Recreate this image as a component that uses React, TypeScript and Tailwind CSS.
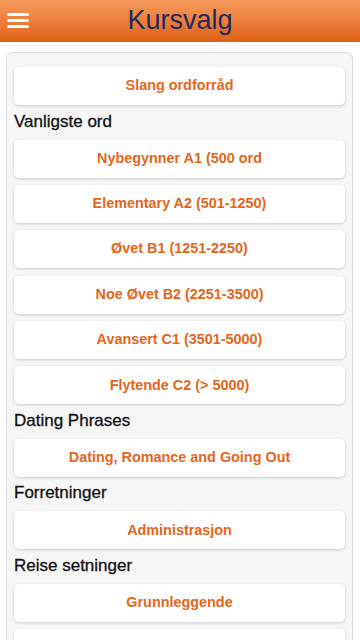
const sections: { title?: string; items: string[] }[] = [
  { items: ['Slang ordforråd'] },
  {
    title: 'Vanligste ord',
    items: [
      'Nybegynner A1 (500 ord',
      'Elementary A2 (501-1250)',
      'Øvet B1 (1251-2250)',
      'Noe Øvet B2 (2251-3500)',
      'Avansert C1 (3501-5000)',
      'Flytende C2 (> 5000)',
    ],
  },
  { title: 'Dating Phrases', items: ['Dating, Romance and Going Out'] },
  { title: 'Forretninger', items: ['Administrasjon'] },
  // the last card is only just showing at the bottom edge
  { title: 'Reise setninger', items: ['Grunnleggende', ''] },
]

export default function App () {
  return (
    <div className="h-[640px] overflow-hidden bg-white font-['Liberation_Sans','Arial',sans-serif]">
      <header className="relative h-[42px] bg-gradient-to-b from-[#f79b5c] to-[#e0600e] flex items-center justify-center">
        <button className="absolute left-[7px] top-[13px] flex flex-col gap-[3px]" aria-label="Meny">
          <span className="block w-[22px] h-[3px] rounded-full bg-white" />
          <span className="block w-[22px] h-[3px] rounded-full bg-white" />
          <span className="block w-[22px] h-[3px] rounded-full bg-white" />
        </button>
        <h1 className="text-[27px] leading-none text-[#1f2a5c] mt-[-1px]">Kursvalg</h1>
      </header>

      <main className="mt-[10px] ml-[6px] mr-[7px] rounded-[7px] border border-[#d9d9d9] bg-[#f6f6f6] px-[7px] pt-[14px] pb-4">
        {sections.map((section, i) => (
          <div key={i}>
            {section.title && (
              <div className="pt-[6.5px] pb-[8px] text-[17px] leading-[20px] text-[#111] [-webkit-text-stroke:0.3px_#111]">
                {section.title}
              </div>
            )}
            <div className="flex flex-col gap-[7.4px]">
              {section.items.map((item, j) => (
                <a
                  key={j}
                  href="#"
                  className="h-[38px] flex items-center justify-center rounded-[5px] bg-white shadow-[0_1px_3px_rgba(0,0,0,0.18)] text-[14.4px] font-bold text-[#e5661b]"
                >
                  {item}
                </a>
              ))}
            </div>
          </div>
        ))}
      </main>
    </div>
  )
}
